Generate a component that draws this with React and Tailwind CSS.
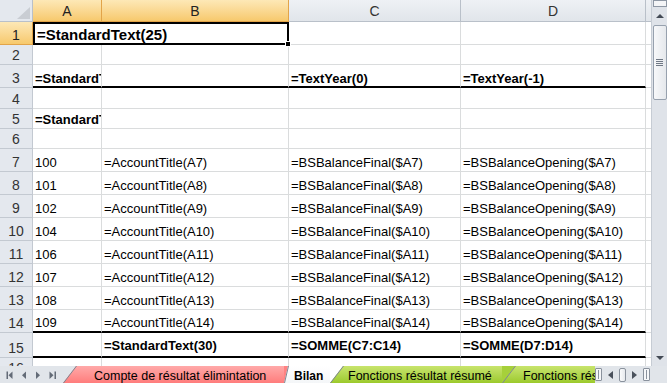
import React from 'react'
import clsx from 'clsx'

const GRID = 'border-[#dadcdd]'

function ColHead({ children, active, last }) {
  return (
    <div
      className={clsx(
        'flex items-center justify-center border-b text-[14px] leading-[16px]',
        !last && 'border-r',
        active
          ? 'bg-linear-to-b from-[#fde8b6] to-[#f7c96c] border-[#e2a449] text-[#222]'
          : 'bg-linear-to-b from-[#eef1f5] to-[#e1e5ea] border-[#b9c0c9] text-[#333]'
      )}
    >
      {children}
    </div>
  )
}

function RowHead({ n, active }) {
  return (
    <div
      className={clsx(
        'flex items-end justify-center overflow-hidden border-r border-b pb-[1px] text-[14px] leading-[16px]',
        active
          ? 'bg-linear-to-b from-[#fde8b6] to-[#f7c96c] border-[#e2a449] text-[#222]'
          : 'bg-[#e4e8ee] border-[#c3c9d1] text-[#333]'
      )}
    >
      {n}
    </div>
  )
}

function Cell({ children, bold, thick, pb = 'pb-[1px]', edge }) {
  return (
    <div
      className={clsx(
        'flex items-end overflow-hidden whitespace-nowrap pl-[2px] text-[13px] leading-[15px] text-black',
        !edge && 'border-r border-r-[#dadcdd]',
        thick ? 'border-b-2 border-b-black' : 'border-b border-b-[#dadcdd]',
        bold && 'font-bold',
        pb
      )}
    >
      {children}
    </div>
  )
}

function Row({ n, a, b, c, d, bold, thick, pb }) {
  return (
    <>
      <RowHead n={n} />
      <Cell bold={bold} thick={thick} pb={pb}>{a}</Cell>
      <Cell bold={bold} thick={thick} pb={pb}>{b}</Cell>
      <Cell bold={bold} thick={thick} pb={pb}>{c}</Cell>
      <Cell bold={bold} thick={thick} pb={pb}>{d}</Cell>
      <Cell edge />
    </>
  )
}

function Tab({ w, under, bg, slant = 13, pl, bold, children }) {
  return (
    <div className={clsx('relative h-full shrink-0', w, under)}>
      <div
        className={clsx('absolute inset-0', bg)}
        style={{ clipPath: `polygon(0 100%, ${slant}px 0, 100% 0, 100% 100%)` }}
      />
      <svg className="absolute left-0 top-0" width={slant + 1} height="17">
        <line x1="0.5" y1="17" x2={slant + 0.5} y2="0" stroke="#7f8793" strokeWidth="1" />
      </svg>
      <span
        className={clsx(
          'relative block whitespace-nowrap pt-[3px] leading-[14px] text-black',
          pl,
          bold ? 'text-[12px] font-bold' : 'text-[12.5px]'
        )}
      >
        {children}
      </span>
    </div>
  )
}

function SplitBox() {
  return (
    <div className="flex h-[13px] w-[7px] items-center justify-center rounded-[1px] border border-[#8a929d] bg-[#f6f7f9]">
      <div className="h-[9px] w-px bg-[#8a929d]" />
    </div>
  )
}

export default function App() {
  const data = [
    [7, '100'],
    [8, '101'],
    [9, '102'],
    [10, '104'],
    [11, '106'],
    [12, '107'],
    [13, '108'],
    [14, '109'],
  ]

  return (
    <div className="flex h-[383px] w-[667px] flex-col overflow-hidden bg-white font-['Liberation_Sans',Arial,sans-serif]">
      <div className="flex h-[366px] overflow-hidden">
        {/* sheet */}
        <div className="h-full w-[651px] overflow-hidden">
          <div className="grid grid-cols-[33px_69px_187px_172px_185px_5px] grid-rows-[22px_23px_20px_23px_21px_20px_20px_repeat(8,23px)_25px_20px]">
            {/* header row */}
            <div className="relative border-r border-b border-[#b9c0c9] bg-[#e4e8ee]">
              <svg className="absolute left-0 top-0" width="33" height="22">
                <polygon points="17,19 30,19 30,7" fill="#c9cdd3" />
              </svg>
            </div>
            <ColHead active>A</ColHead>
            <ColHead active>B</ColHead>
            <ColHead>C</ColHead>
            <ColHead>D</ColHead>
            <ColHead last />

            {/* row 1 */}
            <RowHead n={1} active />
            <div className="relative col-span-2 border-2 border-black">
              <div className="flex h-full items-end overflow-hidden whitespace-nowrap pl-[2px] text-[15px] font-bold leading-[17px] text-black">
                =StandardText(25)
              </div>
              <div className="absolute -bottom-[4px] -right-[4px] z-10 h-[6px] w-[6px] border border-white bg-black" />
            </div>
            <Cell />
            <Cell />
            <Cell edge />

            <Row n={2} />
            <Row n={3} a="=StandardText(20)" c="=TextYear(0)" d="=TextYear(-1)" bold thick pb="pb-0" />
            <Row n={4} />
            <Row n={5} a="=StandardText(21)" bold />
            <Row n={6} />
            {data.map(([n, acc]) => (
              <Row
                key={n}
                n={n}
                a={acc}
                b={`=AccountTitle(A${n})`}
                c={`=BSBalanceFinal($A${n})`}
                d={`=BSBalanceOpening($A${n})`}
                thick={n === 14}
              />
            ))}
            <Row
              n={15}
              b="=StandardText(30)"
              c="=SOMME(C7:C14)"
              d="=SOMME(D7:D14)"
              bold
              thick
              pb="pb-[3px]"
            />
            <Row n={16} />
          </div>
        </div>

        {/* vertical scrollbar */}
        <div className="flex h-full w-[16px] flex-col border-l border-[#c6ccd4] bg-[#dfe3e9]">
          <div className="mx-auto h-[7px] w-[14px] border border-[#8e97a4] bg-[#f4f5f7]" />
          <div className="flex h-[17px] items-center justify-center">
            <svg width="8" height="4">
              <polygon points="0,4 4,0 8,4" fill="#434a55" />
            </svg>
          </div>
          <div className="mx-auto mt-px flex h-[75px] w-[14px] flex-col items-center justify-center gap-[1px] rounded-[2px] border border-[#97a1ae] bg-linear-to-r from-[#f7f8fa] to-[#e5e8ec]">
            <div className="h-px w-[7px] bg-[#6f7885]" />
            <div className="h-px w-[7px] bg-[#6f7885]" />
            <div className="h-px w-[7px] bg-[#6f7885]" />
            <div className="h-px w-[7px] bg-[#6f7885]" />
          </div>
          <div className="flex-1" />
          <div className="flex h-[17px] items-center justify-center">
            <svg width="8" height="4">
              <polygon points="0,0 8,0 4,4" fill="#434a55" />
            </svg>
          </div>
        </div>
      </div>

      {/* sheet tabs bar */}
      <div className="flex h-[17px] bg-[#e1e5ea]">
        <svg className="shrink-0" width="63" height="17">
          <g fill="#636b77">
            <rect x="6.5" y="5.5" width="1.5" height="7.5" />
            <polygon points="12.5,5.5 8.5,9.25 12.5,13" />
            <polygon points="26,5.5 22,9.25 26,13" />
            <polygon points="36,5.5 40,9.25 36,13" />
            <polygon points="49.5,5.5 53.5,9.25 49.5,13" />
            <rect x="54.5" y="5.5" width="1.5" height="7.5" />
          </g>
        </svg>
        <div className="flex w-[532px] shrink-0 overflow-hidden">
          <Tab w="w-[221px]" under="bg-[#e1e5ea]" bg="bg-linear-to-b from-[#ffa9a9] to-[#ff7c7c]" pl="pl-[31px]">
            Compte de résultat élimintation
          </Tab>
          <Tab w="w-[46px]" under="bg-[#ff8282]" bg="bg-linear-to-b from-white to-[#f4f6f8]" slant={4} pl="pl-[10px]" bold>
            Bilan
          </Tab>
          <Tab w="w-[172px]" under="bg-white" bg="bg-linear-to-b from-[#c8e46c] to-[#9cca2a]" pl="pl-[18px]">
            Fonctions résultat résumé
          </Tab>
          <Tab w="w-[120px]" under="bg-[#a6d03a]" bg="bg-linear-to-b from-[#c8e46c] to-[#9cca2a]" pl="pl-[21px]">
            Fonctions résultat détaillé
          </Tab>
        </div>
        <div className="flex w-[8px] shrink-0 items-center">
          <SplitBox />
        </div>
        <div className="flex w-[14px] shrink-0 items-center justify-center">
          <svg width="5" height="8">
            <polygon points="5,0 0,4 5,8" fill="#4a515c" />
          </svg>
        </div>
        <div className="flex w-[10px] shrink-0 items-center pl-[2px]">
          <div className="h-[14px] w-[7px] rounded-[2px] border border-[#8a929d] bg-linear-to-r from-[#fafbfc] to-[#e6e9ed]" />
        </div>
        <div className="flex w-[14px] shrink-0 items-center justify-center">
          <svg width="5" height="8">
            <polygon points="0,0 5,4 0,8" fill="#4a515c" />
          </svg>
        </div>
        <div className="flex w-[10px] shrink-0 items-center pl-[2px]">
          <SplitBox />
        </div>
        <div className="w-[16px] shrink-0" />
      </div>
    </div>
  )
}
